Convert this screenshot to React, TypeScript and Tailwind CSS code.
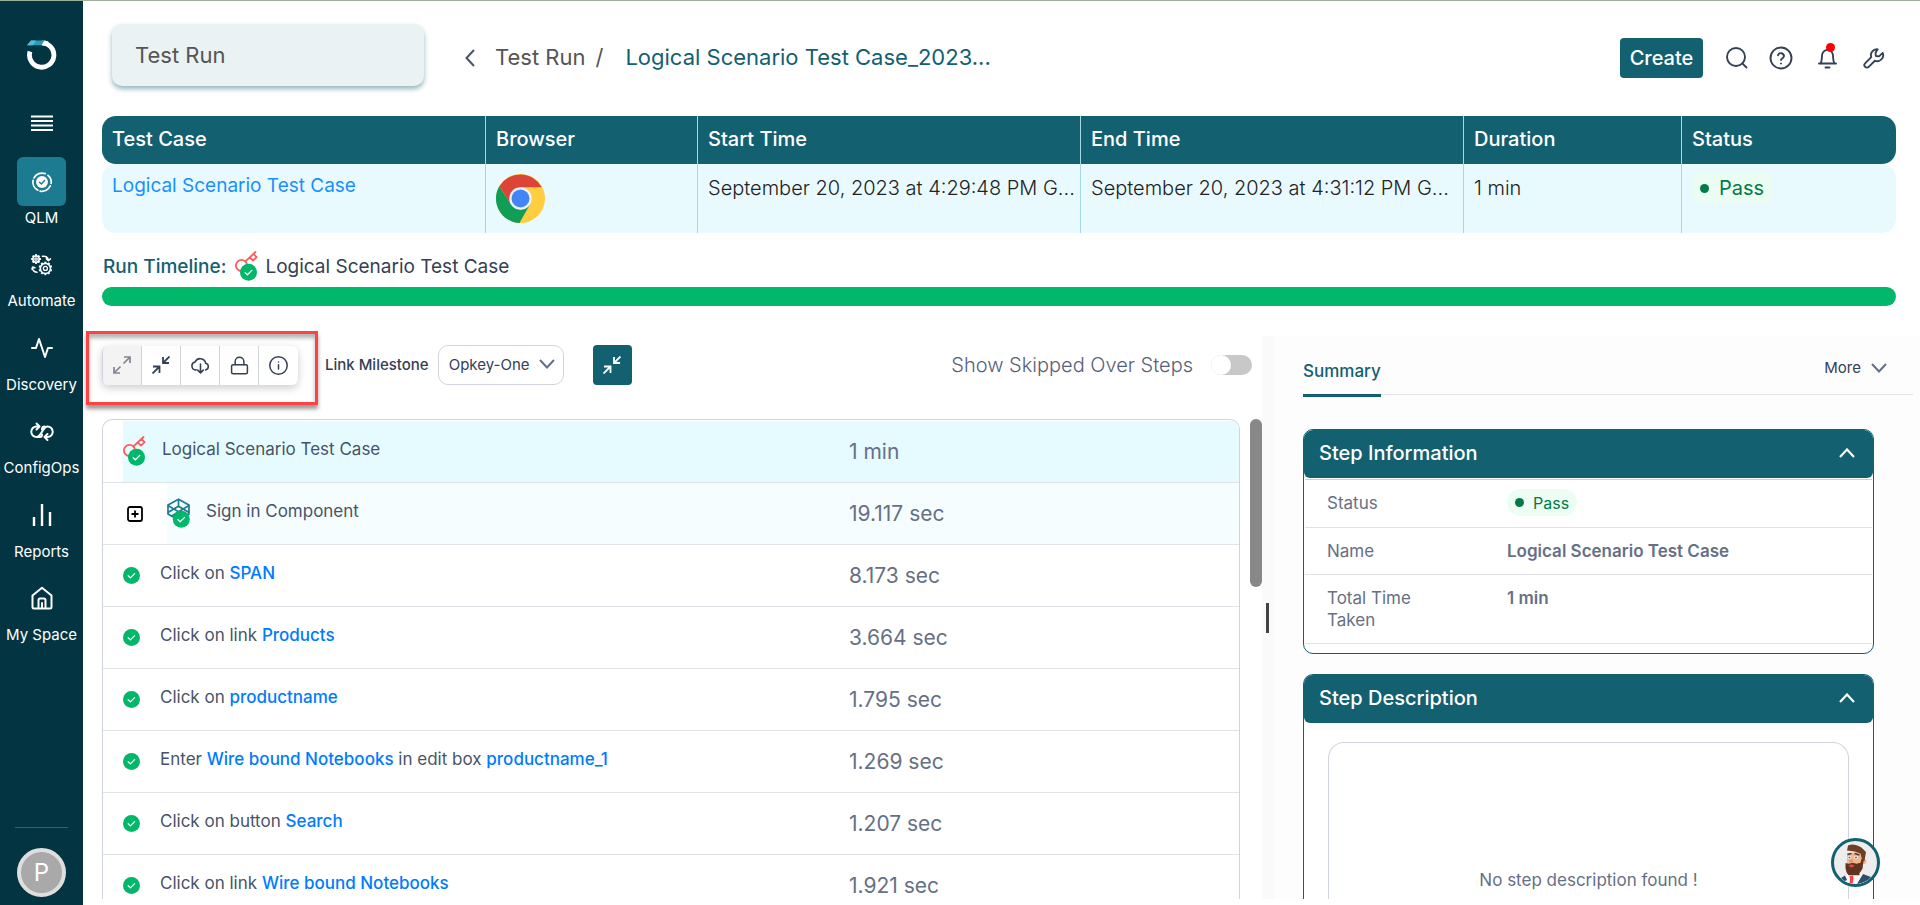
import React from "react";

const CheckDot = ({ className = "" }: { className?: string }) => (
  <svg viewBox="0 0 17 17" className={`h-[17px] w-[17px] ${className}`} aria-hidden="true">
    <circle cx="8.5" cy="8.5" r="8.5" fill="#01b76a" />
    <path d="M5.2 8.8l2.2 2.1 4.2-4.3" fill="none" stroke="#fff" strokeWidth="1.3" strokeLinecap="round" strokeLinejoin="round" />
  </svg>
);

const ScenarioIcon = () => (
  <svg viewBox="0 0 23 30" className="mb-[2px] h-[30px] w-[23px] shrink-0" aria-hidden="true">
    <g fill="none" stroke="#ff5a5a" strokeWidth="1.8" strokeLinejoin="round" strokeLinecap="round">
      <circle cx="6.5" cy="14.5" r="5.6" />
      <path d="M10.5 10.3L20.5 1M14.8 6.4l3.2 3.200 3.600-3.400-3-3" />
    </g>
    <circle cx="13.5" cy="21.3" r="8.5" fill="#01b76a" />
    <path d="M10.2 21.7l2.2 2.1 4.4-4.4" fill="none" stroke="#fff" strokeWidth="1.3" strokeLinecap="round" strokeLinejoin="round" />
  </svg>
);

const ComponentIcon = () => (
  <svg viewBox="0 0 23 30" className="mb-[2px] h-[30px] w-[23px] shrink-0" aria-hidden="true">
    <g fill="none" stroke="#1d7b91" strokeWidth="1.7" strokeLinejoin="round">
      <path d="M11.500 1.200L22 7v9L11.500 22 1 16V7z" />
      <path d="M11.500 1.200v7L1 14.500M11.500 8.200L22 14.500M1 7.500l10.500 6.300L22 7.500M11.500 13.800L4 18.500M11.500 13.800V22" />
    </g>
    <circle cx="14.300" cy="21.300" r="8.500" fill="#01b76a" />
    <path d="M11 21.700l2.200 2.100 4.400-4.400" fill="none" stroke="#fff" strokeWidth="1.300" strokeLinecap="round" strokeLinejoin="round" />
  </svg>
);

const Line = ({ children, size = "h-6 w-6", width = 2 }: { children: React.ReactNode; size?: string; width?: number }) => (
  <svg viewBox="0 0 24 24" className={size} fill="none" stroke="currentColor" strokeWidth={width} strokeLinecap="round" strokeLinejoin="round" aria-hidden="true">
    {children}
  </svg>
);

const Gear = ({ cx, cy, r, teeth }: { cx: number; cy: number; r: number; teeth: number }) => (
  <g>
    <circle cx={cx} cy={cy} r={r} strokeWidth="1.700" />
    <circle cx={cx} cy={cy} r={r * 0.4} strokeWidth="1.400" />
    {Array.from({ length: teeth }, (_, i) => (
      <path key={i} d={`M${cx} ${cy - r}v-1.900`} strokeWidth="2.200" strokeLinecap="butt" transform={`rotate(${(i * 360) / teeth} ${cx} ${cy})`} />
    ))}
  </g>
);

const QlmIcon = () => (
  <Line size="h-[22px] w-[22px]" width={1.9}>
    <path d="M15.500 2.900A9.900 9.900 0 0 0 3.300 7.500M2.200 10.200a9.900 9.900 0 0 0 5.300 10.700M10 21.900a9.900 9.900 0 0 0 11-5.700M22 13.500A9.900 9.900 0 0 0 18.500 4.700" />
    <circle cx="12" cy="12" r="6.500" fill="currentColor" stroke="none" />
    <path d="M9.300 12.200l2 1.900 3.500-3.800" stroke="#1d7b91" strokeWidth="1.500" />
  </Line>
);

const AutomateIcon = () => (
  <Line size="h-[22px] w-[22px]" width={1.6}>
    <Gear cx={5.500} cy={5.500} r={3.400} teeth={8} />
    <Gear cx={15.700} cy={15.700} r={5.500} teeth={10} />
    <path d="M12.500 2.500c3.500-.5 6 1 6.500 4.500M16.800 5.300L19 7.300l2.200-2M1.500 14.500c0 3.500 1.500 5 5 5.500M1 16.500l.8-2.300 2.500.8" />
  </Line>
);

const navItems = [
  { label: "QLM", icon: <QlmIcon />, active: true },
  { label: "Automate", icon: <AutomateIcon /> },
  { label: "Discovery", icon: <Line><path d="M2 12h4l3-9 6 18 3-9h4" /></Line> },
  {
    label: "ConfigOps",
    icon: (
      <Line size="h-6 w-6">
        <path d="M8.500 6.500H6.500a5 5 0 0 0 0 10.500c5 0 6-10.500 11-10.500a5 5 0 0 1 0 10.500h-2" />
        <path d="M6.500 3.500l3 3-3 3M17.500 14l-3 3 3 3M7.500 17h2.500c1 0 2-1 2-2.500M12 9.500c0-1.500 1-3 2.500-3" />
      </Line>
    ),
  },
  { label: "Reports", icon: <Line width={2.4}><path d="M4 23v-9M12 23V1M20 23V9" strokeLinecap="butt" /></Line> },
  { label: "My Space", icon: <Line><path d="M2.500 9.500L12 1.800l9.500 7.700V21a1.500 1.500 0 0 1-1.500 1.500H4A1.500 1.500 0 0 1 2.500 21z" /><path d="M8.500 22v-8a1.500 1.500 0 0 1 1.500-1.500h4a1.500 1.500 0 0 1 1.500 1.500v8M12 22v-5" /></Line> },
];

const Sidebar = () => (
  <aside className="flex w-[83px] shrink-0 flex-col items-center bg-[#033442] text-white">
    <a href="#home" aria-label="Home" className="mt-[39px]">
      <svg viewBox="0 0 30 31" className="h-[31px] w-[30px]" aria-hidden="true">
        <path d="M3 11.500a12.200 12.200 0 1 0 12-8.700" fill="none" stroke="#fff" strokeWidth="4.800" />
        <path d="M4 .5h15l-3 4.700H0z" fill="#2a9db8" />
        <path d="M4 .5h5L6 5.200H0z" fill="#4cc0d6" />
        <path d="M17.500.6l4 1-3 4.200-4-.6z" fill="#fff" />
      </svg>
    </a>
    <button aria-label="Toggle menu" className="mt-11">
      <svg viewBox="0 0 22 16" className="h-4 w-[22px]" aria-hidden="true">
        <path d="M0 1.500h22M0 6h22M0 10.500h22M0 15h22" stroke="#fff" strokeWidth="2" />
      </svg>
    </button>
    <nav className="mt-[26px] flex h-[490px] flex-col justify-between">
      {navItems.map((n) => (
        <a key={n.label} href={`#${n.label}`} className="flex flex-col items-center">
          <span className={`flex h-[49px] w-[49px] items-center justify-center rounded-md ${n.active ? "bg-[#1d7b91]" : ""}`}>{n.icon}</span>
          <span className="whitespace-nowrap text-[15px] leading-6">{n.label}</span>
        </a>
      ))}
    </nav>
    <div className="mb-2 mt-auto flex flex-col items-center">
      <div className="mb-5 h-px w-[53px] bg-[#1d6b7e]" />
      <button className="h-[49px] w-[49px] rounded-full border-4 border-[#dedede] bg-[#a9a9a9] text-2xl leading-none">P</button>
    </div>
  </aside>
);

const Header = () => (
  <header className="flex h-[62px] items-center pl-[10px] pr-[11px]">
    <div className="flex h-[62px] w-[312px] items-center rounded-[10px] bg-[#eaf2f3] pl-[23px] text-[22px] text-[#555] shadow-[0_3px_5px_rgba(19,96,113,0.45)]">Test Run</div>
    <div className="flex flex-1 items-center pt-[5px]">
      <button aria-label="Back" className="ml-[41px] text-[#475467]">
        <svg viewBox="0 0 10 18" className="h-[18px] w-[10px]" aria-hidden="true"><path d="M9 1L1.500 9 9 17" fill="none" stroke="currentColor" strokeWidth="2" /></svg>
      </button>
      <nav className="ml-5 flex items-center text-[22px] text-[#555]">
        <a href="#runs">Test Run</a>
        <span className="ml-[10px]">/</span>
        <a href="#run" className="ml-[22px] text-[#136071]">Logical Scenario Test Case_2023...</a>
      </nav>
      <div className="ml-auto flex items-center text-[#344054]">
        <button className="h-10 w-[83px] rounded bg-[#136071] text-xl font-medium text-white">Create</button>
        <button aria-label="Search" className="ml-[22px]"><Line width={1.9}><circle cx="11" cy="11" r="9" /><path d="M21.500 21.500l-4.200-4.200" /></Line></button>
        <button aria-label="Help" className="ml-5"><Line width={1.9}><circle cx="12" cy="12" r="10.500" /><path d="M9 9.200a3.100 3.100 0 0 1 6 .9c0 2-3 2.600-3 4M12 17.500v.1" /></Line></button>
        <button aria-label="Notifications" className="relative ml-[22px]">
          <Line width={1.9}><path d="M4 17.500h17M5.500 17.500c1.500-2 1.300-4.500 1.500-8a5.500 5.500 0 0 1 11 0c.2 3.500 0 6 1.500 8M10.500 21.500h4" /></Line>
          <span className="absolute -top-[3px] right-1 h-[9px] w-[9px] rounded-full bg-[#f00]" />
        </button>
        <button aria-label="Settings" className="ml-6">
          <Line size="h-[22px] w-[22px]" width={2}><path d="M16 2.500a6.500 6.500 0 0 0-7 8.500L2.300 17.800a2.700 2.700 0 0 0 3.900 3.900L13 15a6.500 6.500 0 0 0 8.500-8.500L17.500 10.300 14 9.800l-.3-3.500z" /></Line>
        </button>
      </div>
    </div>
  </header>
);

const ChromeLogo = () => (
  <svg viewBox="0 0 48 48" className="h-[49px] w-[49px]" role="img" aria-label="Chrome">
    <circle cx="24" cy="24" r="24" fill="#ffcd40" />
    <path d="M3.200 12L14.500 29.500 24 35l9.500-5.500L23 48A24 24 0 0 1 3.200 12z" fill="#0f9d58" />
    <path d="M3.200 12A24 24 0 0 1 44.800 13H24L14.500 29.500z" fill="#db4437" />
    <circle cx="24" cy="24" r="11" fill="#f1f1f1" />
    <circle cx="24" cy="24" r="8.800" fill="#4285f4" />
  </svg>
);

const RunTable = () => (
  <table className="mt-[30px] w-full table-fixed border-separate border-spacing-0 text-left text-xl">
    <colgroup>
      <col className="w-[384px]" /><col className="w-[212px]" /><col className="w-[383px]" /><col className="w-[383px]" /><col className="w-[218px]" /><col />
    </colgroup>
    <thead>
      <tr className="h-12 text-white">
        {["Test Case", "Browser", "Start Time", "End Time", "Duration", "Status"].map((h) => (
          <th key={h} className="border-r border-[#a5d8e0] bg-[#136071] pb-[2px] pl-[10px] font-medium first:rounded-l-[14px] last:rounded-r-[14px] last:border-r-0">{h}</th>
        ))}
      </tr>
    </thead>
    <tbody>
      <tr className="h-[69px] align-top text-[#222] [&>td]:border-r [&>td]:border-[#a5d8e0] [&>td]:bg-[#e9faff] [&>td]:pl-[10px] [&>td]:pt-[10px] [&>td:first-child]:rounded-l-[14px] [&>td:last-child]:rounded-r-[14px] [&>td:last-child]:border-r-0">
        <td><a href="#case" className="block text-[19px] leading-6 text-[#1890ff]">Logical Scenario Test Case</a></td>
        <td><ChromeLogo /></td>
        <td className="truncate font-light">September 20, 2023 at 4:29:48 PM G...</td>
        <td className="truncate font-light">September 20, 2023 at 4:31:12 PM G...</td>
        <td className="font-light">1 min</td>
        <td>
          <span className="-mt-[2px] flex h-8 w-fit items-center gap-[10px] rounded-lg bg-[#ebfdf3] px-2 text-[#027a48]">
            <span className="h-[9px] w-[9px] rounded-full bg-[#027a48]" />Pass
          </span>
        </td>
      </tr>
    </tbody>
  </table>
);

const ExpandIcon = () => (
  <svg viewBox="0 0 18 18" className="h-[18px] w-[18px]" fill="none" stroke="currentColor" strokeWidth="1.700" aria-hidden="true">
    <path d="M11 1h6v6M17 1l-6.500 6.500M7 17H1v-6M1 17l6.500-6.500" />
  </svg>
);
const CollapseIcon = () => (
  <svg viewBox="0 0 18 18" className="h-[18px] w-[18px]" fill="none" stroke="currentColor" strokeWidth="1.800" aria-hidden="true">
    <path d="M11 1v6h6M11 7l6.500-6.500M1 10.500h6.500V17M7.500 10.500L.5 17.500" />
  </svg>
);

const tools = [
  { name: "Expand all", icon: <ExpandIcon /> },
  { name: "Collapse all", icon: <CollapseIcon /> },
  { name: "Download", icon: <Line size="h-[19px] w-[19px]" width={2}><path d="M6.500 17.500H6a5 5 0 0 1-.8-9.900 7 7 0 0 1 13.300 1.500A4.300 4.300 0 0 1 18.500 17.500M12 10v11M8.500 17.800L12 21.300l3.500-3.500" /></Line> },
  { name: "Lock", icon: <Line size="h-[19px] w-[19px]" width={1.9}><rect x="2" y="11" width="20" height="11.500" rx="2" /><path d="M6.500 11V7a5.500 5.500 0 0 1 11 0v4" /></Line> },
  { name: "Information", icon: <Line size="h-[19px] w-[19px]" width={1.9}><circle cx="12" cy="12" r="11" /><path d="M12 16.500V11M12 7.500v.1" /></Line> },
];

const Toolbar = () => (
  <div className="flex h-10 items-center pr-[10px]">
    <div className="relative flex">
      <div className="flex h-[39px] overflow-hidden rounded-md border-l border-[#d0d5dd] bg-white text-[#344054] shadow-[0_3px_8px_rgba(0,0,0,0.2)]">
        {tools.map((t, i) => (
          <button key={t.name} aria-label={t.name} disabled={i === 0} className="flex w-[39px] items-center justify-center border-r border-[#d0d5dd] last:border-r-0 disabled:bg-[#f3f3f3] disabled:text-[#7f8691]">{t.icon}</button>
        ))}
      </div>
      <div className="pointer-events-none absolute -bottom-5 -left-4 -right-5 -top-[15px] border-[3px] border-[#fd4343] shadow-[0_4px_4px_rgba(0,0,0,0.4),inset_0_4px_4px_rgba(0,0,0,0.3)]" />
    </div>
    <label htmlFor="milestone" className="ml-[27px] whitespace-nowrap text-[15px] font-medium text-[#344054]">Link Milestone</label>
    <div className="relative ml-[9px]">
      <select id="milestone" className="h-10 w-[126px] appearance-none rounded-[10px] border border-[#d0d5dd] bg-white pl-[10px] text-[15px] text-[#344054]"><option>Opkey-One</option></select>
      <svg viewBox="0 0 16 10" className="pointer-events-none absolute right-[9px] top-[14px] h-[10px] w-4" aria-hidden="true"><path d="M1 1l7 7.500L15 1" fill="none" stroke="#667085" strokeWidth="2" /></svg>
    </div>
    <button aria-label="Collapse panel" className="ml-[29px] flex h-10 w-[39px] items-center justify-center rounded bg-[#136071] text-white"><CollapseIcon /></button>
    <label htmlFor="skipped" className="ml-auto text-xl font-light text-[#56607a]">Show Skipped Over Steps</label>
    <input id="skipped" type="checkbox" role="switch" className="ml-[18px] h-5 w-[41px] appearance-none rounded-full bg-[#c8c8c8] before:block before:h-5 before:w-5 before:rounded-full before:bg-white" />
  </div>
);

const B = ({ children }: { children: React.ReactNode }) => <a href="#object" className="font-medium text-[#007bff]">{children}</a>;

const steps: { text: React.ReactNode; time: string }[] = [
  { text: <>Click on <B>SPAN</B></>, time: "8.173 sec" },
  { text: <>Click on link <B>Products</B></>, time: "3.664 sec" },
  { text: <>Click on <B>productname</B></>, time: "1.795 sec" },
  { text: <>Enter <B>Wire bound Notebooks</B> in edit box <B>productname_1</B></>, time: "1.269 sec" },
  { text: <>Click on button <B>Search</B></>, time: "1.207 sec" },
  { text: <>Click on link <B>Wire bound Notebooks</B></>, time: "1.921 sec" },
];

const Time = ({ children }: { children: React.ReactNode }) => <span className="w-[390px] shrink-0 text-[21px] text-[#667085]">{children}</span>;

const StepList = () => (
  <div className="mt-[34px] flex min-h-0 flex-1 justify-between">
    <ul className="mr-[10px] min-w-0 flex-1 overflow-hidden rounded-t-[10px] border border-b-0 border-[#d0d5dd] pt-px text-[17px] text-[#475467] [&>li]:flex [&>li]:h-[62px] [&>li]:border-b [&>li]:border-[#e0e3e8]">
      <li className="pl-5">
        <div className="flex flex-1 items-center bg-[#e5fbff]">
          <ScenarioIcon /><span className="flex-1 pb-1 pl-4">Logical Scenario Test Case</span><Time>1 min</Time>
        </div>
      </li>
      <li className="items-stretch pl-6">
        <button aria-label="Expand step" className="mr-6 text-black">
          <svg viewBox="0 0 16 16" className="h-4 w-4" fill="none" stroke="currentColor" strokeWidth="1.800" aria-hidden="true"><rect x="1" y="1" width="14" height="14" rx="2" /><path d="M8 4.500v7M4.500 8h7" /></svg>
        </button>
        <div className="flex flex-1 items-center bg-[#f5fdff]">
          <ComponentIcon /><span className="flex-1 pb-1 pl-4">Sign in Component</span><Time>19.117 sec</Time>
        </div>
      </li>
      {steps.map((s, i) => (
        <li key={i} className="items-center pl-5">
          <CheckDot /><span className="flex-1 pb-1 pl-5">{s.text}</span><Time>{s.time}</Time>
        </li>
      ))}
    </ul>
    <div className="h-[168px] w-3 rounded-full bg-[#888]" />
  </div>
);

const Chevron = () => (
  <svg viewBox="0 0 16 10" className="h-[10px] w-4" aria-hidden="true"><path d="M1 9l7-7.500L15 9" fill="none" stroke="#fff" strokeWidth="2.200" /></svg>
);

const CardHeader = ({ title }: { title: string }) => (
  <button className="flex h-12 w-full items-center justify-between rounded-b-md bg-[#136071] pb-[2px] pl-[15px] pr-[18px] text-xl font-medium text-white">{title}<Chevron /></button>
);

const Assistant = () => (
  <button aria-label="Assistant" className="absolute bottom-[18px] right-10 h-[49px] w-[49px] overflow-hidden rounded-full border-[3px] border-[#136071] bg-[#ededed]">
    <svg viewBox="0 0 43 43" className="h-full w-full" aria-hidden="true">
      <path d="M7 38l4-3 5-2 11-1 8 3 2 2-8 6H13z" fill="#f8f8f8" />
      <path d="M7 37l4-2.500 2 4.500-3 1.500zM29 33l8 3-3 4-8 3h-3z" fill="#2d4f6c" />
      <path d="M15.500 35l3.500-.5.500 3-1 5.500h-3l.5-5z" fill="#f0444b" />
      <path d="M13 12l16-1-1 15-5 6h-6l-4-6z" fill="#f5b58a" />
      <circle cx="30" cy="20.500" r="2.500" fill="#f5b58a" />
      <path d="M11.500 22l3 .8 4-1 4 1 4-1 1-4 2 2-1 8-3 4.500v2h-11l-2-3-1-4z" fill="#5f3420" />
      <path d="M14 4.500c6-2.500 12 .5 15 3.500l3 3-1.500 9-2 .5-2-8-6-2-7.500-1z" fill="#6f4028" />
      <path d="M13.500 13.500l4-1M20.500 12.500l5 1.500" stroke="#5f3420" strokeWidth="1.500" />
      <circle cx="15.500" cy="16.500" r="1.800" fill="#fff" /><circle cx="22" cy="16.500" r="1.800" fill="#fff" />
      <circle cx="15.500" cy="16.500" r="1.100" fill="#2d7bb0" /><circle cx="22" cy="16.500" r="1.100" fill="#2d7bb0" />
      <path d="M15.500 19l3-1 .5 3h-4z" fill="#f08a6c" />
      <path d="M14.500 24.500q3-2 6 0-3 4-6 0z" fill="#e64545" />
    </svg>
  </button>
);

const SummaryPanel = () => (
  <section className="flex w-[646px] shrink-0 flex-col bg-[#fdfdfd] pl-[29px] pt-[34px]">
    <div className="mr-[7px] flex h-[25px] items-start justify-between border-b border-[#e0e3e6]">
      <button className="-mt-[13px] h-10 border-b-[3px] border-[#136071] pb-2 text-[17px] font-medium text-[#136071]">Summary</button>
      <button className="-mt-[13px] mr-[26px] flex items-center gap-[10px] text-[15px] text-[#344054]">More
        <svg viewBox="0 0 16 10" className="h-[10px] w-4" aria-hidden="true"><path d="M1 1l7 7.500L15 1" fill="none" stroke="#667085" strokeWidth="2" /></svg>
      </button>
    </div>
    <div className="mr-[46px] mt-[34px] shrink-0 overflow-hidden rounded-[10px] border border-[#136071] bg-white pb-[9px]">
      <CardHeader title="Step Information" />
      <dl className="mx-px mt-px border-t border-[#cdd0da] text-[17px] leading-[22px] text-[#667085] [&>div]:flex [&>div]:border-b [&>div]:border-[#dfe2e8] [&>div]:pl-[22px] [&_dt]:w-[180px] [&_dt]:pr-16 [&_dd]:font-semibold">
        <div className="h-12 items-center pb-[2px]"><dt>Status</dt><dd><span className="flex h-[27px] items-center gap-[9px] rounded-full bg-[#ecfdf3] px-2 text-base font-normal text-[#027a48]"><span className="h-[9px] w-[9px] rounded-full bg-[#027a48]" />Pass</span></dd></div>
        <div className="h-[47px] items-center"><dt>Name</dt><dd>Logical Scenario Test Case</dd></div>
        <div className="h-[69px] pt-3"><dt>Total Time Taken</dt><dd>1 min</dd></div>
      </dl>
    </div>
    <div className="mr-[46px] mt-5 flex min-h-0 flex-1 flex-col overflow-hidden rounded-t-[10px] border border-b-0 border-[#136071] bg-white">
      <CardHeader title="Step Description" />
      <div className="mx-6 mt-[19px] flex flex-1 items-end justify-center rounded-t-2xl border border-b-0 border-[#d0d5dd] pb-[6px] text-[17px] text-[#667085]">No step description found !</div>
    </div>
  </section>
);

export default function App() {
  return (
    <div className="relative flex h-screen overflow-hidden border-t border-[#9cb09c] bg-white font-['Inter',sans-serif]">
      <Sidebar />
      <main className="flex min-w-0 flex-1 flex-col pb-[6px] pt-[23px]">
        <div className="px-6 pl-[19px]">
          <Header />
          <RunTable />
          <div className="mt-[18px] flex h-8 items-center text-[19px]">
            <span className="pl-px font-medium text-[#136071]">Run Timeline:</span>
            <span className="ml-[9px]"><ScenarioIcon /></span>
            <span className="ml-[7px] text-[#344054]">Logical Scenario Test Case</span>
          </div>
          <div className="mt-1 h-[19px] rounded-full bg-[#01b76a]" />
        </div>
        <div className="mt-[30px] flex min-h-0 flex-1">
          <section className="flex min-w-0 flex-1 flex-col pl-[19px] pt-[9px]">
            <Toolbar />
            <StepList />
          </section>
          <div className="flex w-3 items-center justify-start bg-[#fafafa] pl-1"><div className="h-[30px] w-[3px] bg-[#444]" /></div>
          <SummaryPanel />
        </div>
      </main>
      <Assistant />
    </div>
  );
}
